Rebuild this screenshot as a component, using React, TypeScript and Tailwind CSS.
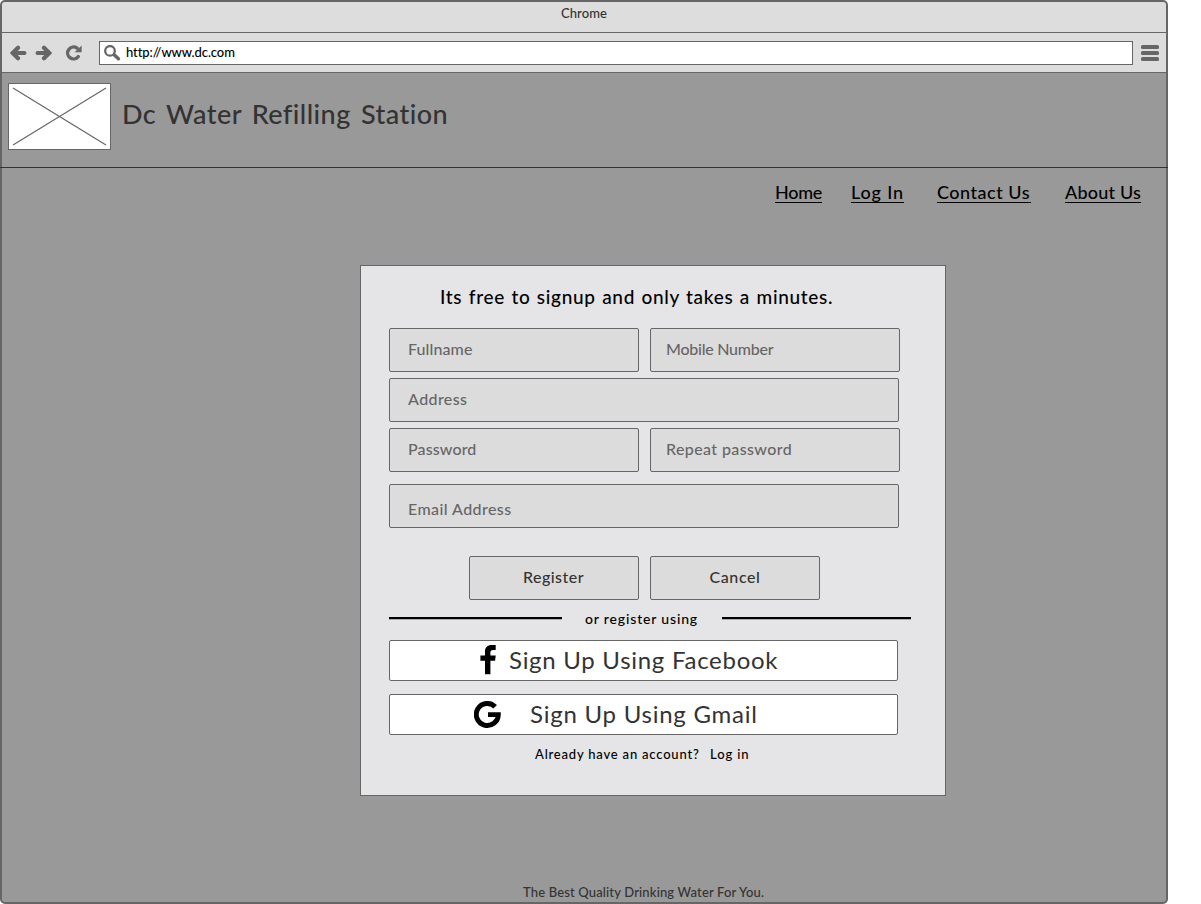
import type { ReactNode } from "react";

function ArrowIcon({ className = "" }: { className?: string }) {
  return (
    <svg width="17" height="16" viewBox="0 0 17 16" className={className} fill="none" stroke="#666" strokeWidth="4.2" strokeLinecap="round">
      <path d="M4 8H14.4" />
      <path d="M8 2.8L2.8 8L8 13.2" strokeLinejoin="miter" />
    </svg>
  );
}

function ReloadIcon() {
  return (
    <svg width="18" height="16" viewBox="0 0 18 16" fill="none">
      <path d="M13.2 11.6A5.9 5.9 0 1 1 12 3.2" stroke="#666" strokeWidth="3.4" strokeLinecap="round" />
      <path d="M16.6 0.4V7.2H9.6Z" fill="#666" />
    </svg>
  );
}

function SearchIcon() {
  return (
    <svg width="17" height="16" viewBox="0 0 17 16" fill="none" stroke="#666">
      <circle cx="6" cy="5.9" r="4.8" strokeWidth="2.3" />
      <path d="M10.4 10L14.4 13.8" strokeWidth="3.4" strokeLinecap="round" />
    </svg>
  );
}

function FacebookIcon() {
  return (
    <svg width="16" height="30" viewBox="0 0 16 30">
      <path d="M5 29.3V15.8H0.4V10.6H5V6.6C5 2.4 7.6 0 11.6 0H15.7V5H13.1C11.1 5 10.4 5.9 10.4 7.6V10.6H15.7L15.1 15.8H10.4V29.3Z" fill="#000" />
    </svg>
  );
}

function GoogleIcon() {
  return (
    <svg width="27" height="27" viewBox="0 0 27 27" fill="none" stroke="#000" strokeWidth="4.9">
      <path d="M21.2 5.8A11 11 0 1 0 24.3 13.6H14" />
    </svg>
  );
}

function Field({ children, className = "" }: { children: ReactNode; className?: string }) {
  return (
    <div className={`flex h-11 items-center rounded-[2px] border border-[#666] bg-[#dddcdd] pb-[2px] text-[16px] font-medium text-[#666] ${className}`}>
      {children}
    </div>
  );
}

export default function App() {
  return (
    <div className="h-[904px] w-[1201px] overflow-hidden bg-white font-['Lato','Noto_Sans',sans-serif] font-medium">
      <div className="flex h-[904px] w-[1168px] flex-col rounded-[5px] border-2 border-[#666] bg-[#999]">
        <div className="flex h-[31px] shrink-0 justify-center rounded-t-[3px] border-b border-[#666] bg-[#dddddd] pt-[3px] text-[13px] leading-[17px] tracking-[0.09px] text-[#333]">
          Chrome
        </div>

        <div className="flex h-10 shrink-0 items-center border-b border-[#666] bg-[#dddddd] pl-[8px]">
          <ArrowIcon />
          <ArrowIcon className="ml-[8px] rotate-180" />
          <div className="ml-[13px]">
            <ReloadIcon />
          </div>
          <div className="ml-auto flex h-6 w-[1034px] items-center border border-[#666] bg-white pl-[4px]">
            <SearchIcon />
            <span className="ml-[5px] pt-[1px] text-[13px] tracking-[-0.1px] text-black">http://www.dc.com</span>
          </div>
          <div className="mr-[7px] ml-[8px] flex w-[18px] flex-col gap-[2px]">
            <span className="h-1 rounded-[1.5px] bg-[#666]" />
            <span className="h-1 rounded-[1.5px] bg-[#666]" />
            <span className="h-1 rounded-[1.5px] bg-[#666]" />
          </div>
        </div>

        <header className="-mx-[2px] flex h-[95px] shrink-0 border-b border-[#333] pt-[10px] pl-[8px]">
          <svg width="103" height="67" viewBox="0 0 103 67">
            <rect x="0.5" y="0.5" width="102" height="66" fill="#fff" stroke="#666" />
            <path d="M5 5L98 62M98 5L5 62" stroke="#666" strokeWidth="1.2" />
          </svg>
          <h1 className="ml-[11px] pt-[14px] text-[27px] leading-[34px] tracking-[0.44px] whitespace-nowrap text-[#333] [word-spacing:3px]">
            Dc Water Refilling Station
          </h1>
        </header>

        <nav className="flex pt-[13px] pl-[773px] text-[18px] leading-[22px] whitespace-nowrap text-black">
          <a className="h-[22px] w-[47px] border-b border-black tracking-[-0.29px]">Home</a>
          <a className="ml-[29px] h-[22px] w-[53px] border-b border-black tracking-[0.86px]">Log In</a>
          <a className="ml-[33px] h-[22px] w-[94px] border-b border-black tracking-[0.52px]">Contact Us</a>
          <a className="ml-[34px] h-[22px] w-[76px] border-b border-black tracking-[0.2px]">About Us</a>
        </nav>

        <main className="mt-[62px] ml-[358px] h-[531px] w-[586px] shrink-0 border border-[#666] bg-[#e5e4e6] pl-[28px]">
          <h2 className="mt-[19px] ml-[51px] text-[19px] leading-6 tracking-[0.68px] whitespace-nowrap text-black [word-spacing:1px]">
            Its free to signup and only takes a minutes.
          </h2>

          <div className="mt-[19px] flex flex-col gap-[6px]">
            <div className="flex gap-[11px]">
              <Field className="w-[250px] pl-[18px] tracking-[0.1px]">Fullname</Field>
              <Field className="w-[250px] pl-[15px] tracking-[-0.25px]">Mobile Number</Field>
            </div>
            <Field className="w-[510px] pl-[18px] tracking-[0.4px]">Address</Field>
            <div className="flex gap-[11px]">
              <Field className="w-[250px] pl-[18px] tracking-[0.12px]">Password</Field>
              <Field className="w-[250px] pl-[15px] tracking-[0.38px]">Repeat password</Field>
            </div>
          </div>
          <Field className="mt-[12px] w-[510px] pt-[8px] pl-[18px] tracking-[0.42px]">Email Address</Field>

          <div className="mt-[28px] ml-[80px] flex gap-[11px]">
            <button className="h-11 w-[170px] rounded-[2px] border border-[#666] bg-[#dddcdd] pr-[1px] pb-[2px] text-[16px] tracking-[0.46px] text-[#333]">
              Register
            </button>
            <button className="h-11 w-[170px] rounded-[2px] border border-[#666] bg-[#dddcdd] pb-[2px] text-[16px] tracking-[0.59px] text-[#333]">
              Cancel
            </button>
          </div>

          <div className="mt-[9px] flex h-[20px] text-[14px] leading-[20px] text-black">
            <span className="mt-[8px] h-[2px] w-[173px] bg-black shadow-[0_1px_0_0_#aaa]" />
            <span className="ml-[23px] w-[137px] tracking-[0.84px] whitespace-nowrap">or register using</span>
            <span className="mt-[8px] h-[2px] w-[189px] bg-black shadow-[0_1px_0_0_#aaa]" />
          </div>

          <button className="mt-[11px] flex h-[41px] w-[509px] rounded-[2px] border border-[#666] bg-white pl-[90px] text-[24px] leading-[30px] font-normal text-[#333]">
            <span className="mt-[4px]">
              <FacebookIcon />
            </span>
            <span className="mt-[4px] ml-[13px] tracking-[0.72px] whitespace-nowrap">Sign Up Using Facebook</span>
          </button>
          <button className="mt-[13px] flex h-[41px] w-[509px] rounded-[2px] border border-[#666] bg-white pl-[84px] text-[24px] leading-[30px] font-normal text-[#333]">
            <span className="mt-[6px]">
              <GoogleIcon />
            </span>
            <span className="mt-[4px] ml-[29px] tracking-[0.76px] whitespace-nowrap">Sign Up Using Gmail</span>
          </button>

          <div className="mt-[10px] ml-[146px] flex gap-[10px] text-[13px] leading-[18px] whitespace-nowrap text-black">
            <span className="w-[165px] tracking-[0.8px]">Already have an account?</span>
            <a className="tracking-[0.9px]">Log in</a>
          </div>
        </main>

        <footer className="mt-auto pb-[1px] pl-[521px] text-[13px] leading-[18px] tracking-[0.15px] text-[#333]">
          The Best Quality Drinking Water For You.
        </footer>
      </div>
    </div>
  );
}
